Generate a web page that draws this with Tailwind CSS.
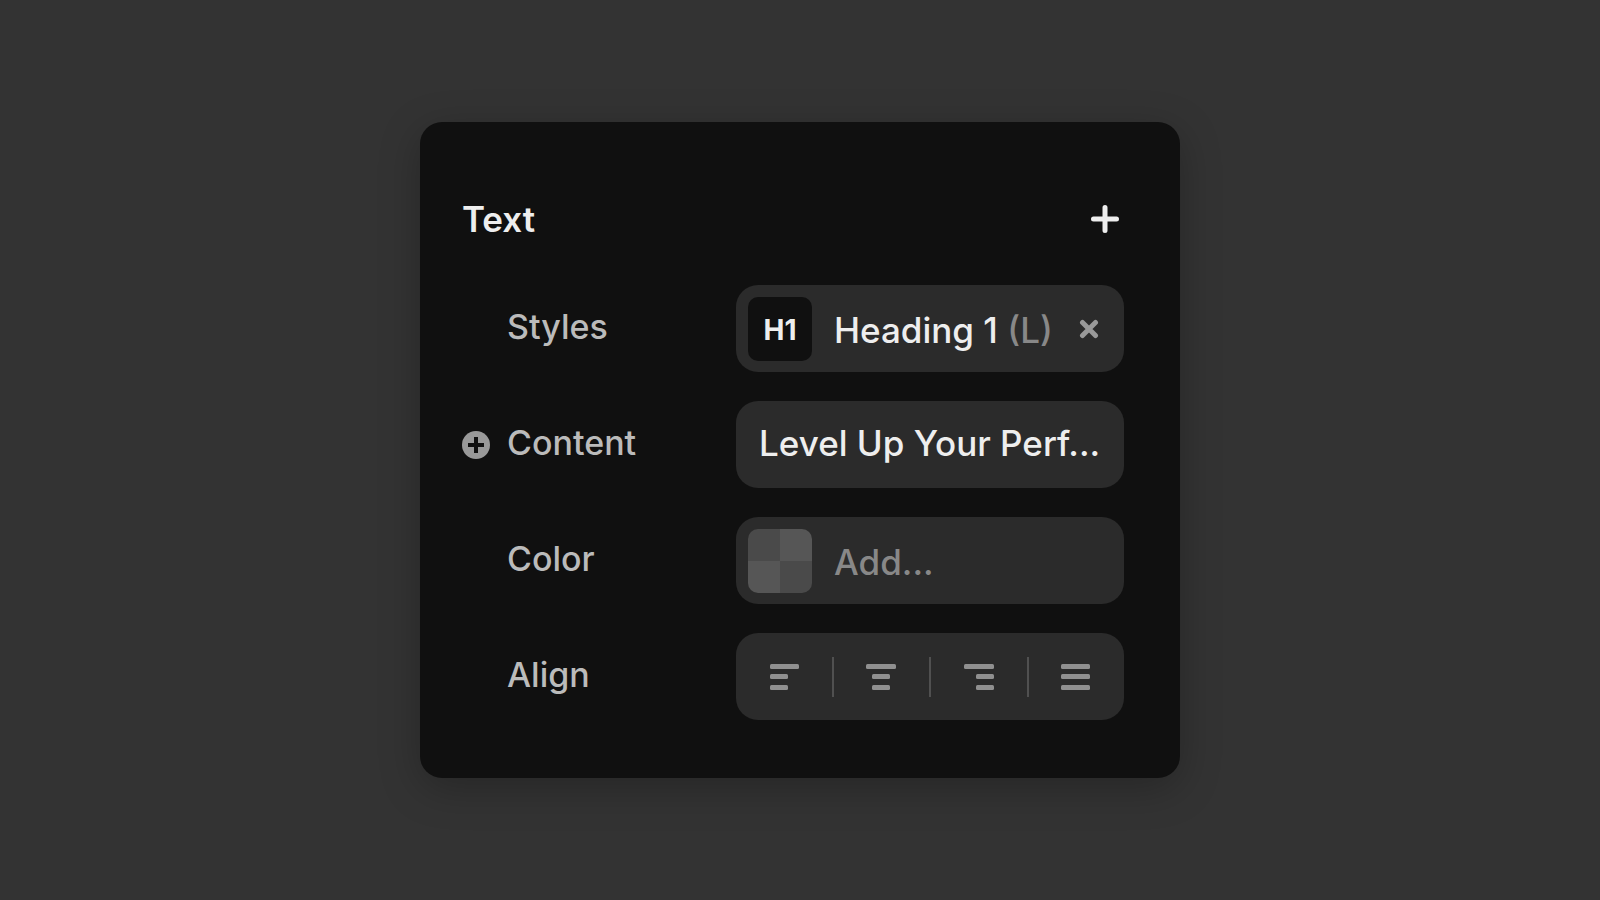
<!DOCTYPE html>
<html lang="en">
<head>
<meta charset="utf-8">
<meta name="viewport" content="width=device-width, initial-scale=1">
<title>Text</title>
<script src="https://cdn.jsdelivr.net/npm/@tailwindcss/browser@4"></script>
</head>
<body class="flex min-h-screen items-center justify-center bg-[#333333] font-['Inter',sans-serif] text-[35px] leading-[44px] font-medium text-[#bbbbbb]">
<main class="w-full max-w-[760px] rounded-[22px] bg-[#101010] pt-[75px] pr-14 pb-[58px] pl-[42px] shadow-[0_10px_40px_rgba(0,0,0,0.25)]">
  <header class="mb-11 flex items-center justify-between">
    <h1 class="font-semibold text-[#eeeeee]">Text</h1>
    <button type="button" aria-label="Add text property" class="mr-[5px] text-[#eeeeee]">
      <svg class="size-7" viewBox="0 0 28 28" fill="none" stroke="currentColor" stroke-width="5" stroke-linecap="round"><path d="M14 2.500v23M2.500 14h23"/></svg>
    </button>
  </header>
  <div class="flex flex-col gap-[29px]">
    <div class="flex items-center">
      <span id="styles-label" class="flex-1 pb-[3px] pl-[45px] text-[34px]">Styles</span>
      <div class="flex h-[87px] w-[388px] items-center rounded-[22px] bg-[#2b2b2b] pl-3 pr-[25px]">
        <button type="button" aria-labelledby="styles-label styles-value" class="flex flex-1 items-center gap-[22px] text-left text-[#eeeeee]">
          <span class="flex size-16 items-center justify-center rounded-[10px] bg-[#101010] pt-0.5 text-[28px] leading-8 font-bold">H1</span>
          <span id="styles-value" class="pt-[3px] whitespace-nowrap">Heading 1 <span class="text-[#888888]">(L)</span></span>
        </button>
        <button type="button" aria-label="Remove style" class="text-[#999999]">
          <svg class="size-5" viewBox="0 0 20 20" fill="none" stroke="currentColor" stroke-width="5" stroke-linecap="round"><path d="M3.500 3.500l13 13M16.500 3.500l-13 13"/></svg>
        </button>
      </div>
    </div>
    <div class="flex items-center">
      <div class="flex flex-1 items-center gap-[17px]">
        <button type="button" aria-label="Add content variable" class="text-[#999999]">
          <svg class="size-7" viewBox="0 0 28 28"><circle cx="14" cy="14" r="14" fill="currentColor"/><path d="M14 6v16M6 14h16" stroke="#101010" stroke-width="4"/></svg>
        </button>
        <label for="content" class="pb-[3px] text-[34px]">Content</label>
      </div>
      <input id="content" type="text" value="Level Up Your Perf..." class="h-[87px] w-[388px] rounded-[22px] bg-[#2b2b2b] pr-4 pb-[3px] pl-[23px] text-[#eeeeee] outline-none">
    </div>
    <div class="flex items-center">
      <label for="color" class="flex-1 pb-[3px] pl-[45px] text-[34px]">Color</label>
      <div class="flex h-[87px] w-[388px] items-center gap-[22px] rounded-[22px] bg-[#2b2b2b] px-3">
        <button type="button" aria-label="Pick color" class="grid size-16 shrink-0 grid-cols-2 overflow-hidden rounded-[10px]">
          <span class="h-8 bg-[#4a4a4a]"></span><span class="h-8 bg-[#565656]"></span>
          <span class="h-8 bg-[#565656]"></span><span class="h-8 bg-[#4a4a4a]"></span>
        </button>
        <input id="color" type="text" placeholder="Add..." class="min-w-0 flex-1 bg-transparent pt-[3px] text-[#eeeeee] outline-none placeholder:text-[#888888]">
      </div>
    </div>
    <div class="flex items-center">
      <span id="align-label" class="flex-1 pb-[3px] pl-[45px] text-[34px]">Align</span>
      <div role="group" aria-labelledby="align-label" class="flex h-[87px] w-[388px] items-center rounded-[22px] bg-[#2b2b2b] text-[#909090]">
        <button type="button" aria-label="Align left" class="flex h-10 flex-1 items-center justify-center border-r-2 border-[#505050]">
          <svg class="h-7 w-[30px]" viewBox="0 0 30 28" fill="currentColor"><rect x="1" y="1" width="29" height="5" rx="1.500"/><rect x="1" y="11" width="18" height="5" rx="1.500"/><rect x="1" y="22" width="18" height="5" rx="1.500"/></svg>
        </button>
        <button type="button" aria-label="Align center" class="flex h-10 flex-1 items-center justify-center border-r-2 border-[#505050]">
          <svg class="h-7 w-[30px]" viewBox="0 0 30 28" fill="currentColor"><rect x="0" y="1" width="30" height="5" rx="1.500"/><rect x="6" y="11" width="18" height="5" rx="1.500"/><rect x="6" y="22" width="18" height="5" rx="1.500"/></svg>
        </button>
        <button type="button" aria-label="Align right" class="flex h-10 flex-1 items-center justify-center border-r-2 border-[#505050]">
          <svg class="h-7 w-[30px]" viewBox="0 0 30 28" fill="currentColor"><rect x="0" y="1" width="30" height="5" rx="1.500"/><rect x="12" y="11" width="18" height="5" rx="1.500"/><rect x="12" y="22" width="18" height="5" rx="1.500"/></svg>
        </button>
        <button type="button" aria-label="Justify" class="flex h-10 flex-1 items-center justify-center">
          <svg class="h-7 w-[30px]" viewBox="0 0 30 28" fill="currentColor"><rect x="0" y="1" width="29" height="5" rx="1.500"/><rect x="0" y="11" width="29" height="5" rx="1.500"/><rect x="0" y="22" width="29" height="5" rx="1.500"/></svg>
        </button>
      </div>
    </div>
  </div>
</main>
</body>
</html>
